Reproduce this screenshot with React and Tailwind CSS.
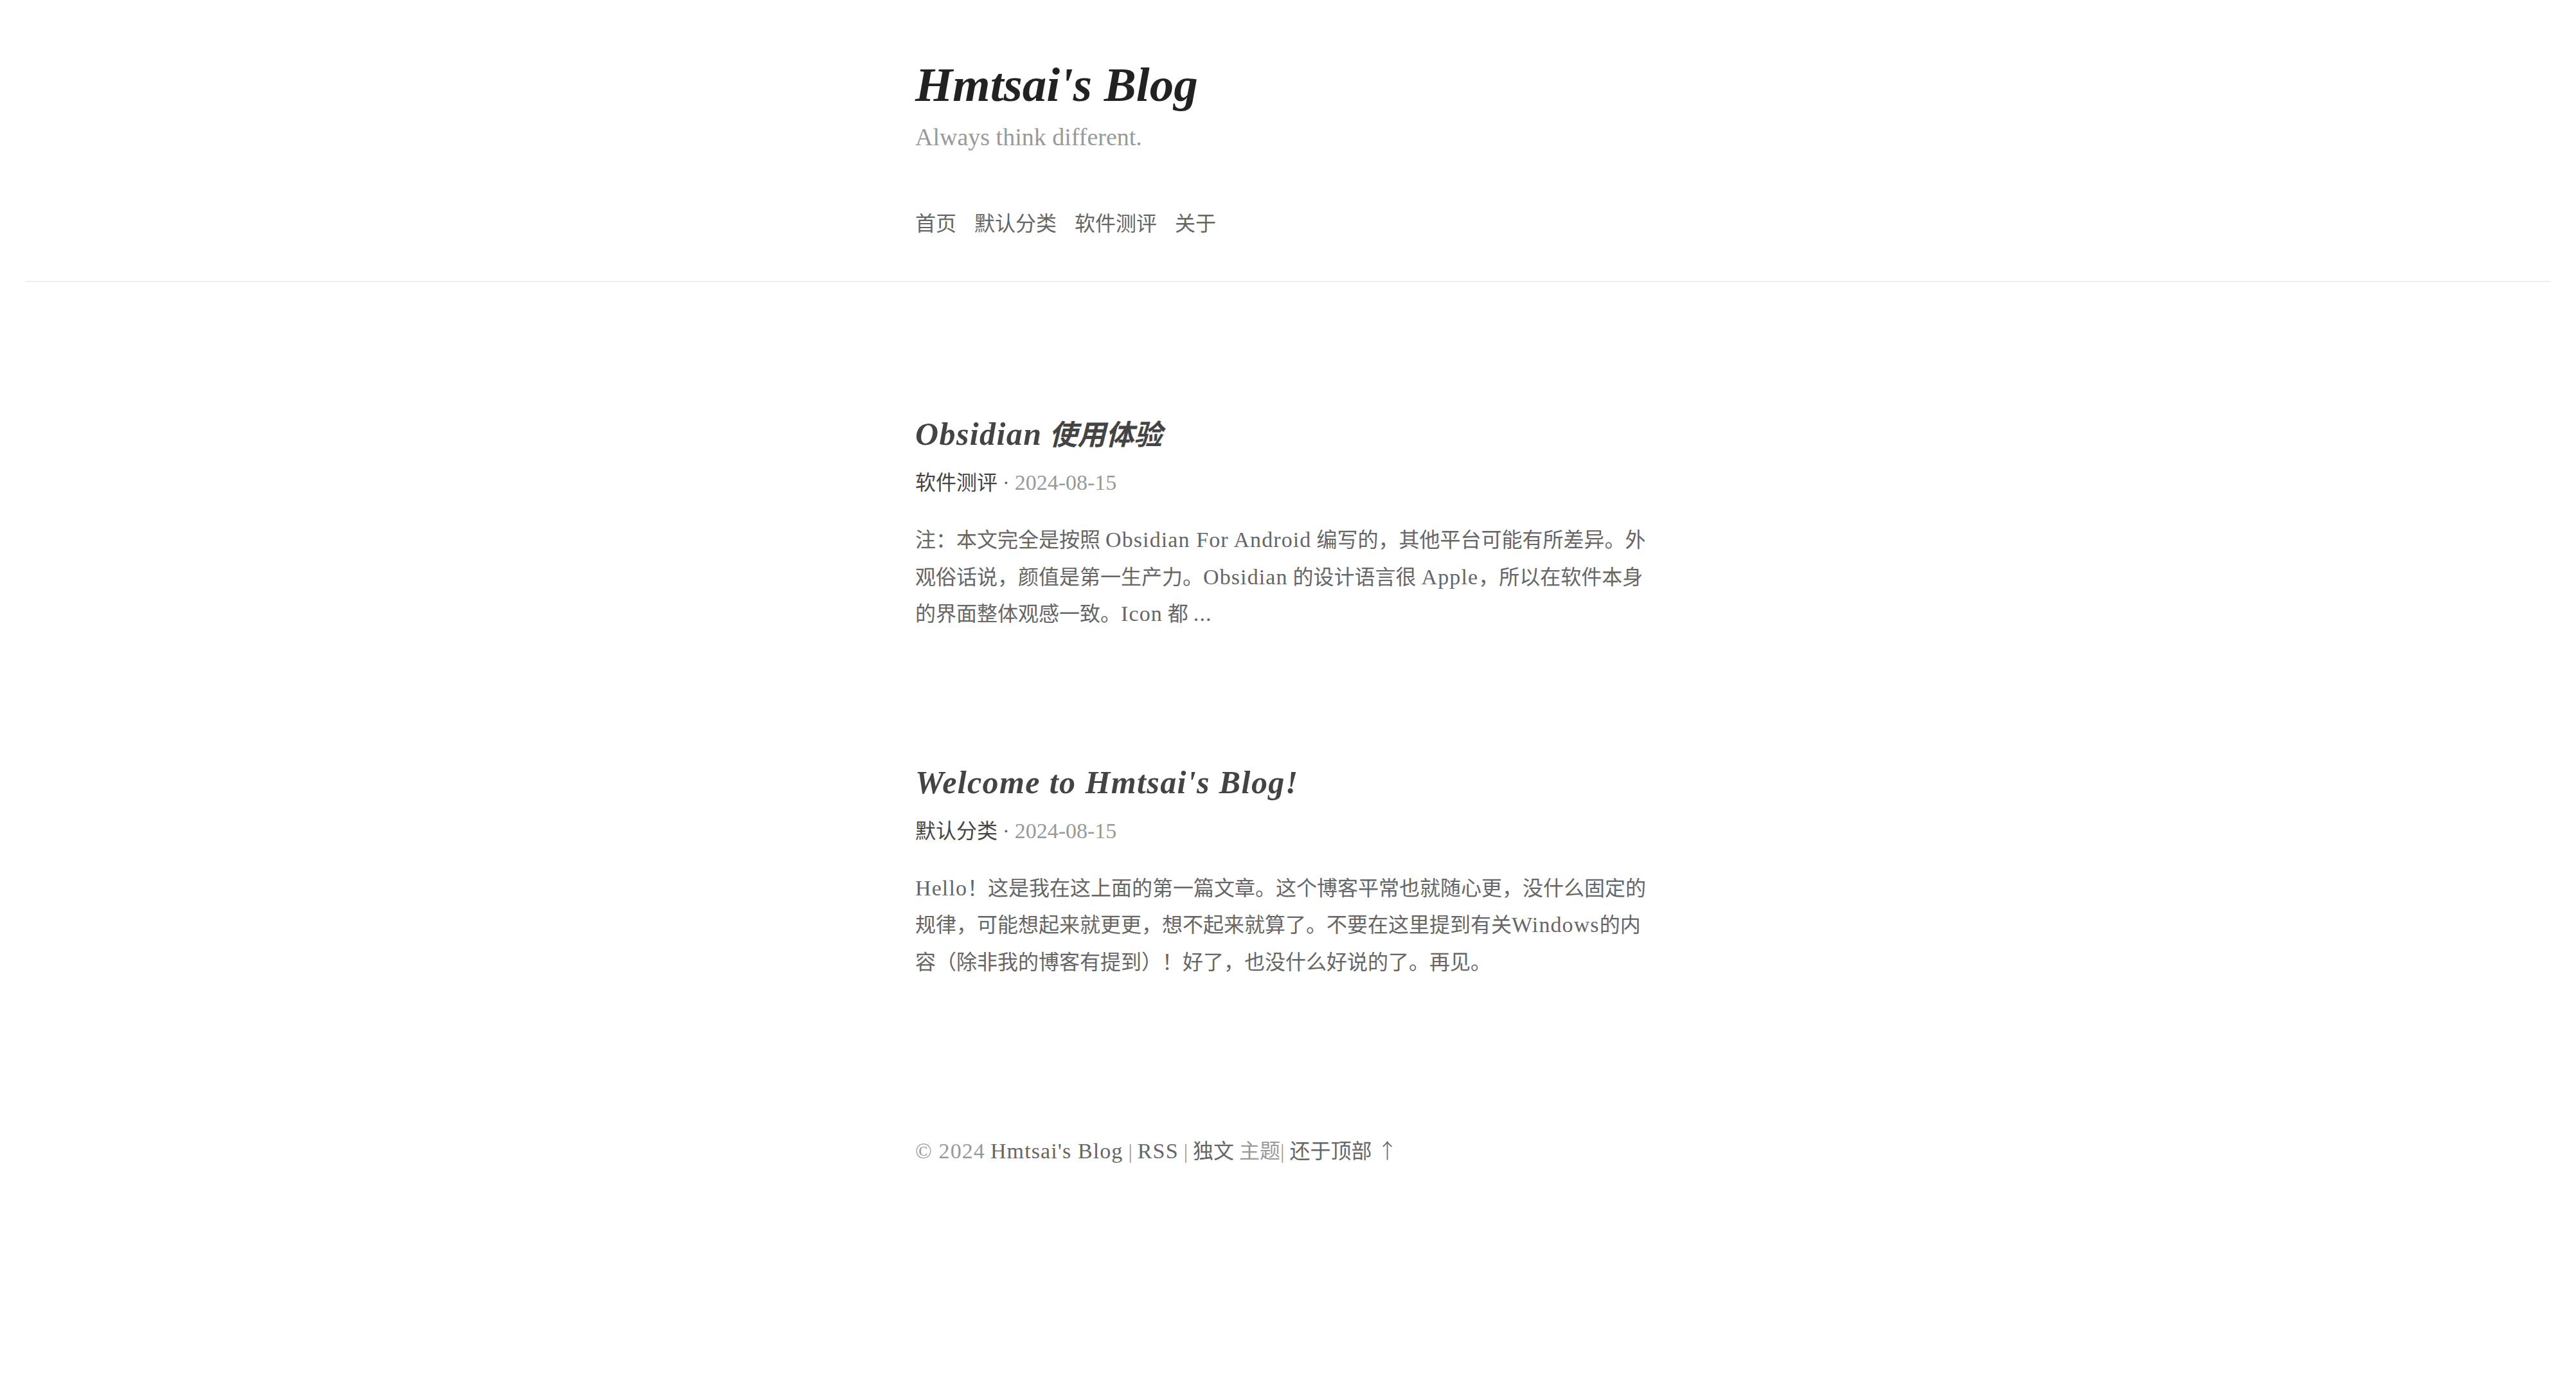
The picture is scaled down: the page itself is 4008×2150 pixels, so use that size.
const FONT = "font-['Liberation_Serif','Noto_Sans_CJK_SC',serif]";

const NAV = ["首页", "默认分类", "软件测评", "关于"];

const POSTS = [
  {
    title: "Obsidian 使用体验",
    category: "软件测评",
    date: "2024-08-15",
    excerpt:
      "注：本文完全是按照 Obsidian For Android 编写的，其他平台可能有所差异。外观俗话说，颜值是第一生产力。Obsidian 的设计语言很 Apple，所以在软件本身的界面整体观感一致。Icon 都 ...",
  },
  {
    title: "Welcome to Hmtsai's Blog!",
    category: "默认分类",
    date: "2024-08-15",
    excerpt:
      "Hello！这是我在这上面的第一篇文章。这个博客平常也就随心更，没什么固定的规律，可能想起来就更更，想不起来就算了。不要在这里提到有关Windows的内容（除非我的博客有提到）！好了，也没什么好说的了。再见。",
  },
];

// latin runs get a slightly larger size so they sit like the original serif next to CJK
function Mixed({ text, latin }) {
  const parts = text.split(/([\x21-\x7E][\x20-\x7E]*[\x21-\x7E]|[\x21-\x7E])/);
  return parts.map((part, i) =>
    i % 2 === 1 ? (
      <span key={i} className={latin}>
        {part}
      </span>
    ) : (
      part
    )
  );
}

function Post({ post }) {
  return (
    <article>
      <h2 className="text-[44px] leading-[46px] font-bold italic text-[#444]">
        <Mixed text={post.title} latin="text-[50px] leading-[40px] tracking-[1.4px]" />
      </h2>
      <div className="mt-[34px] text-[32px] leading-[32px]">
        <span className="text-[#444]">{post.category}</span>
        <span className="text-[#666]"> · </span>
        <span className="text-[34px] leading-[28px] text-[#999]">{post.date}</span>
      </div>
      <p className="mt-[45px] w-[1156px] text-[32px] leading-[57.5px] text-[#666]">
        <Mixed text={post.excerpt} latin="text-[34px] leading-[50px] tracking-[1.1px]" />
      </p>
    </article>
  );
}

export default function App() {
  return (
    <div className={`min-h-screen bg-white ${FONT}`}>
      <header className="px-[40px]">
        <div className="border-b-2 border-[#efefef]">
          <div className="w-[1160px] mx-auto pt-[94px] pb-[73px]">
            <h1 className="text-[75px] leading-[76px] font-bold italic text-[#222]">Hmtsai's Blog</h1>
            <p className="mt-[24px] text-[38px] leading-[38px] text-[#999]">Always think different.</p>
            <nav className="mt-[100px] flex gap-[28px] text-[32px] leading-[32px] text-[#666]">
              {NAV.map((n) => (
                <a key={n} href="#">
                  {n}
                </a>
              ))}
            </nav>
          </div>
        </div>
      </header>

      <main className="w-[1160px] mx-auto pt-[216px] flex flex-col gap-[212px]">
        {POSTS.map((p) => (
          <Post key={p.title} post={p} />
        ))}
      </main>

      <footer className="w-[1160px] mx-auto mt-[248px] pb-[300px] text-[32px] leading-[32px] text-[#999]">
        <span className="text-[34px] leading-[28px] tracking-[1.1px]">© 2024</span>{" "}
        <span className="text-[34px] leading-[28px] tracking-[1.1px] text-[#666]">Hmtsai's Blog</span> |{" "}
        <span className="text-[34px] leading-[28px] tracking-[1.1px] text-[#666]">RSS</span> |{" "}
        <span className="text-[#666]">独文</span> 主题| <span className="text-[#666]">还于顶部</span>{" "}
        <span className="font-['Noto_Sans_CJK_SC',sans-serif] font-light leading-[28px] text-[#666]">↑</span>
      </footer>
    </div>
  );
}
